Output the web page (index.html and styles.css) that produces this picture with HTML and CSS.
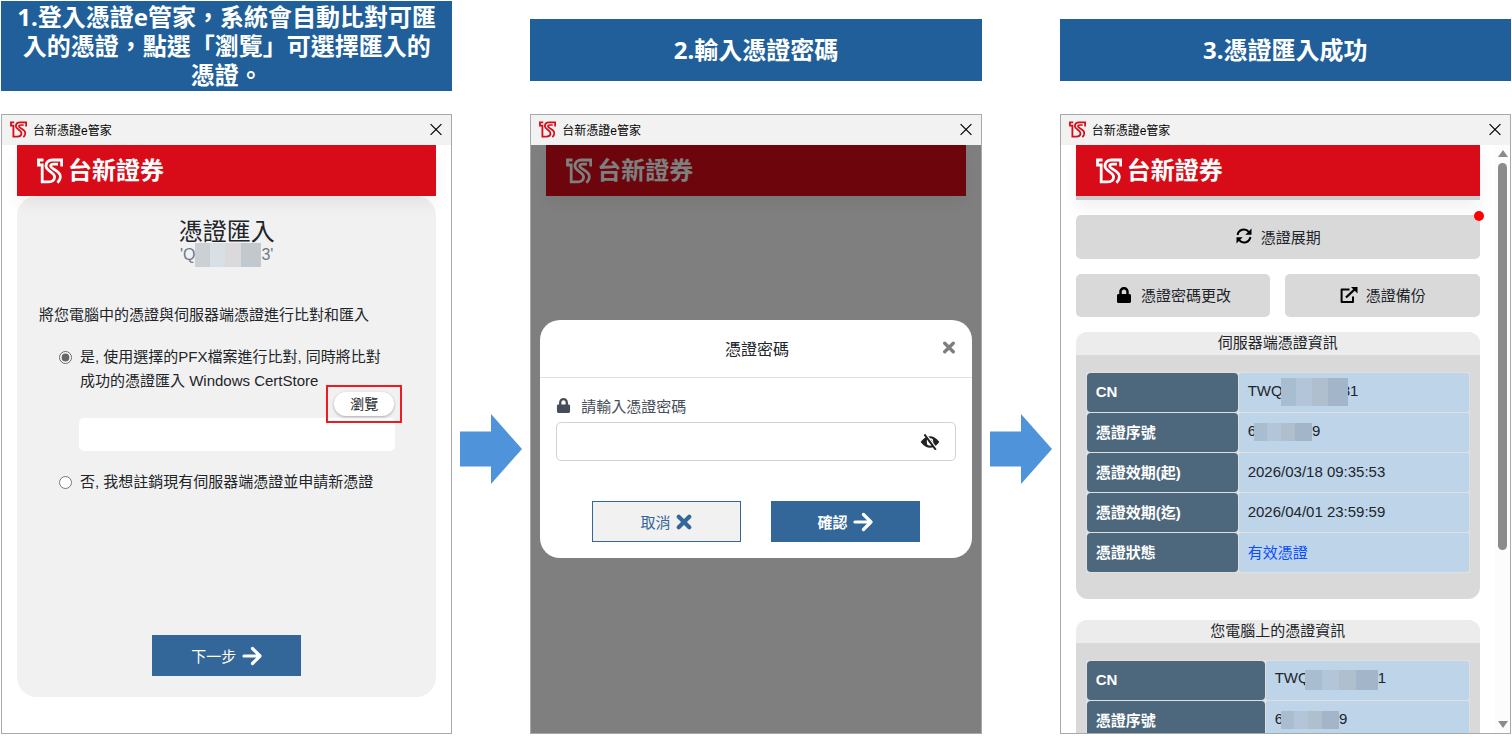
FILE: index.html
```html
<!DOCTYPE html>
<html lang="zh-Hant">
  <head>
    <meta charset="UTF-8" />
    <meta name="viewport" content="width=device-width, initial-scale=1.0" />
    <title>台新憑證e管家</title>
    <link rel="stylesheet" href="styles.css">
  </head>
  <body>
    <!-- Shared icons -->
    <svg class="icon-defs" aria-hidden="true">
      <symbol id="logo" viewBox="0 0 26 25">
        <g fill="none" stroke="currentColor">
          <path d="M6.500 1.500H1.500V6.500H5.200V23.400H11C15 23.400 17.600 21.400 17.600 18.400C17.600 13.600 9 12.400 9 7.400C9 3.600 11.600 1.500 15.400 1.500H24.700V8" stroke-width="2.800" />
          <path d="M21 5.600H16.600C14.600 5.600 13.600 6.400 13.600 7.600C13.600 10.800 23.400 11.800 23.400 18C23.400 20.600 22.400 22.400 20.400 24.200" stroke-width="2.600" />
        </g>
      </symbol>
      <symbol id="close" viewBox="0 0 12 12">
        <path d="M1 1L11 11M11 1L1 11" fill="none" stroke="currentColor" stroke-width="1.100" />
      </symbol>
      <symbol id="times" viewBox="0 0 14 14">
        <path d="M2.400 2.400L11.600 11.600M11.600 2.400L2.400 11.600" fill="none" stroke="currentColor" stroke-width="3.600" stroke-linecap="round" />
      </symbol>
      <symbol id="next" viewBox="0 0 20 20">
        <path d="M2 10H17M10.500 2.500L18 10L10.500 17.500" fill="none" stroke="currentColor" stroke-width="3.200" stroke-linecap="round" stroke-linejoin="round" />
      </symbol>
      <symbol id="lock" viewBox="0 0 448 512">
        <path fill="currentColor" d="M400 224h-24v-72C376 68.200 307.800 0 224 0S72 68.200 72 152v72H48c-26.500 0-48 21.500-48 48v192c0 26.500 21.500 48 48 48h352c26.500 0 48-21.500 48-48V272c0-26.500-21.500-48-48-48zm-104 0H152v-72c0-39.700 32.300-72 72-72s72 32.300 72 72v72z" />
      </symbol>
      <symbol id="sync" viewBox="0 0 16 16">
        <path d="M1.600 7A6.400 6.400 0 0 1 12.800 3.800L14 5M14.400 9A6.400 6.400 0 0 1 3.200 12.200L2 11" fill="none" stroke="currentColor" stroke-width="2" />
        <path d="M15.500 0.500V6.700H9.300ZM0.500 15.500V9.300H6.700Z" fill="currentColor" />
      </symbol>
      <symbol id="export" viewBox="0 0 18 16">
        <path d="M9.500 2.600H1.600V14.900H13V9.500" fill="none" stroke="currentColor" stroke-width="2" stroke-linejoin="round" />
        <path d="M6 10.500L14.500 2.500" stroke="currentColor" stroke-width="2.400" />
        <path d="M11 0H17.500V6.500Z" fill="currentColor" />
      </symbol>
      <symbol id="eye-off" viewBox="0 0 18 16">
        <path d="M1 8Q9 -1.500 17 8Q9 17.500 1 8Z" fill="none" stroke="currentColor" stroke-width="2" />
        <path d="M1 8Q4 3.500 7 3.200Q4.600 8 7 12.800Q4 12.500 1 8ZM17 8Q14 3.500 11 3.200Q13.400 8 11 12.800Q14 12.500 17 8Z" fill="currentColor" />
        <circle cx="9.500" cy="7.500" r="1.800" fill="currentColor" />
        <path d="M4.800 0L16 15.200" stroke="#fff" stroke-width="1.600" />
        <path d="M3.400 0.400L14.800 15.800" stroke="currentColor" stroke-width="2" />
      </symbol>
      <symbol id="step-arrow" viewBox="0 0 62 70">
        <path d="M0 17.500H31V0L62 35L31 70V52.500H0Z" fill="currentColor" />
      </symbol>
    </svg>

    <main class="guide">
      <!-- Step 1 -->
      <section class="step">
        <div class="caption-row">
          <h2 class="caption caption-tall">1.登入憑證e管家，系統會自動比對可匯入的憑證，點選「瀏覽」可選擇匯入的憑證。</h2>
        </div>
        <div class="window">
          <div class="titlebar">
            <svg class="title-logo"><use href="#logo" /></svg>
            <span>台新憑證e管家</span>
            <button class="close" aria-label="關閉"><svg><use href="#close" /></svg></button>
          </div>
          <div class="page">
            <header class="brand">
              <svg class="brand-logo"><use href="#logo" /></svg>
              <span>台新證券</span>
            </header>
            <form class="import-card">
              <h1>憑證匯入</h1>
              <p class="user-id">'Q<span class="mask mask-id"></span>3'</p>
              <p class="intro">將您電腦中的憑證與伺服器端憑證進行比對和匯入</p>
              <div class="choice">
                <input type="radio" name="mode" id="usePfx" checked />
                <label for="usePfx">是, 使用選擇的PFX檔案進行比對, 同時將比對成功的憑證匯入 Windows CertStore</label>
              </div>
              <div class="file-pick">
                <div class="highlight"><button type="button" class="browse">瀏覽</button></div>
                <input type="text" class="file-path" aria-label="憑證檔案" />
              </div>
              <div class="choice">
                <input type="radio" name="mode" id="applyNew" />
                <label for="applyNew">否, 我想註銷現有伺服器端憑證並申請新憑證</label>
              </div>
              <button type="button" class="btn btn-next">下一步 <svg><use href="#next" /></svg></button>
            </form>
          </div>
        </div>
      </section>

      <svg class="step-arrow"><use href="#step-arrow" /></svg>

      <!-- Step 2 -->
      <section class="step">
        <div class="caption-row">
          <h2 class="caption">2.輸入憑證密碼</h2>
        </div>
        <div class="window">
          <div class="titlebar">
            <svg class="title-logo"><use href="#logo" /></svg>
            <span>台新憑證e管家</span>
            <button class="close" aria-label="關閉"><svg><use href="#close" /></svg></button>
          </div>
          <div class="page">
            <header class="brand">
              <svg class="brand-logo"><use href="#logo" /></svg>
              <span>台新證券</span>
            </header>
            <div class="backdrop">
              <form class="modal">
                <div class="modal-header">
                  <h3>憑證密碼</h3>
                  <button type="button" class="modal-close" aria-label="關閉"><svg><use href="#times" /></svg></button>
                </div>
                <div class="modal-body">
                  <label for="certPassword"><svg><use href="#lock" /></svg>請輸入憑證密碼</label>
                  <div class="password">
                    <input type="password" id="certPassword" />
                    <button type="button" aria-label="顯示密碼"><svg><use href="#eye-off" /></svg></button>
                  </div>
                </div>
                <div class="modal-footer">
                  <button type="button" class="btn btn-cancel">取消 <svg><use href="#times" /></svg></button>
                  <button type="button" class="btn btn-ok">確認 <svg><use href="#next" /></svg></button>
                </div>
              </form>
            </div>
          </div>
        </div>
      </section>

      <svg class="step-arrow"><use href="#step-arrow" /></svg>

      <!-- Step 3 -->
      <section class="step">
        <div class="caption-row">
          <h2 class="caption">3.憑證匯入成功</h2>
        </div>
        <div class="window">
          <div class="titlebar">
            <svg class="title-logo"><use href="#logo" /></svg>
            <span>台新憑證e管家</span>
            <button class="close" aria-label="關閉"><svg><use href="#close" /></svg></button>
          </div>
          <div class="scroll-area">
            <div class="page">
              <header class="brand brand-line">
                <svg class="brand-logo"><use href="#logo" /></svg>
                <span>台新證券</span>
              </header>
              <div class="actions">
                <button class="action action-wide"><svg><use href="#sync" /></svg>憑證展期<span class="dot"></span></button>
                <button class="action"><svg><use href="#lock" /></svg>憑證密碼更改</button>
                <button class="action"><svg><use href="#export" /></svg>憑證備份</button>
              </div>
              <section class="info">
                <h3>伺服器端憑證資訊</h3>
                <table>
                  <tr>
                    <th>CN</th>
                    <td>TWQ<span class="mask mask-cn"></span>31</td>
                  </tr>
                  <tr>
                    <th>憑證序號</th>
                    <td>6<span class="mask mask-serial"></span>9</td>
                  </tr>
                  <tr>
                    <th>憑證效期(起)</th>
                    <td>2026/03/18 09:35:53</td>
                  </tr>
                  <tr>
                    <th>憑證效期(迄)</th>
                    <td>2026/04/01 23:59:59</td>
                  </tr>
                  <tr>
                    <th>憑證狀態</th>
                    <td class="valid">有效憑證</td>
                  </tr>
                </table>
              </section>
              <section class="info info-local">
                <h3>您電腦上的憑證資訊</h3>
                <table>
                  <tr>
                    <th>CN</th>
                    <td>TWQ<span class="mask mask-cn-local"></span>1</td>
                  </tr>
                  <tr>
                    <th>憑證序號</th>
                    <td>6<span class="mask mask-serial"></span>9</td>
                  </tr>
                </table>
              </section>
            </div>
            <div class="scrollbar">
              <span class="arrow-up"></span>
              <span class="thumb"></span>
              <span class="arrow-down"></span>
            </div>
          </div>
        </div>
      </section>
    </main>
  </body>
</html>
```

FILE: styles.css
```css
* {
  margin: 0;
  padding: 0;
  box-sizing: border-box;
}

body {
  font-family: "Liberation Sans", "Noto Sans CJK TC", sans-serif;
  font-size: 15px;
  color: #212529;
  background: #fff;
}

button,
input {
  font: inherit;
  color: inherit;
}

button {
  border: none;
  background: none;
  cursor: pointer;
}

.icon-defs {
  display: none;
}

.guide {
  display: grid;
  grid-template-columns: 1fr 78px 1fr 78px 1fr;
  height: 100vh;
  padding: 0 1px 4px;
}

.step {
  display: flex;
  flex-direction: column;
  min-width: 0;
  min-height: 0;
}

.step-arrow {
  width: 62px;
  height: 70px;
  margin-top: 414px;
  justify-self: center;
  color: #4f94da;
}

/* Captions */
.caption-row {
  display: flex;
  align-items: center;
  height: 114px;
  padding-bottom: 14px;
  flex-shrink: 0;
}

.caption {
  display: flex;
  align-items: center;
  justify-content: center;
  width: 100%;
  min-height: 62px;
  padding: 0 10px 2px;
  background: #215f9a;
  color: #fff;
  font-family: "Noto Sans", "Noto Sans CJK TC", sans-serif;
  font-size: 24px;
  line-height: 29px;
  text-align: center;
}

.caption-tall {
  min-height: 90px;
  margin-top: -8px;
}

/* Window frame */
.window {
  display: flex;
  flex-direction: column;
  flex: 1;
  min-height: 0;
  overflow: hidden;
  border: 1px solid #a9a9a9;
}

.titlebar {
  display: flex;
  align-items: center;
  height: 30px;
  padding: 0 8px 2px;
  gap: 6px;
  flex-shrink: 0;
  background: #f2f2f2;
  color: #000;
  font-size: 12px;
}

.title-logo {
  width: 17px;
  height: 17px;
  color: #d80c18;
}

.close {
  display: flex;
  margin-left: auto;
}

.close svg {
  width: 14px;
  height: 13px;
}

.page {
  position: relative;
  display: flex;
  flex-direction: column;
  flex: 1;
  min-height: 0;
  padding: 0 15px;
}

.brand {
  position: relative;
  z-index: 1;
  display: flex;
  align-items: center;
  gap: 5px;
  height: 51px;
  padding: 0 20px;
  flex-shrink: 0;
  background: #d80c18;
  color: #fff;
  font-size: 24px;
  font-weight: bold;
  line-height: 48px;
  box-shadow: 0 8px 16px rgba(0, 0, 0, 0.06);
}

.brand-line {
  height: 55px;
  border-bottom: 4px solid #c9cdcd;
}

.brand-logo {
  width: 26px;
  height: 26px;
}

.mask {
  display: inline-block;
  vertical-align: middle;
  background: linear-gradient(90deg, #ccd0d5 23%, #d8dfe5 23% 46%, #dcd9dc 46% 70%, #c1c8ce 70%);
}

/* Import form */
.import-card {
  display: flex;
  flex-direction: column;
  align-items: center;
  margin-bottom: 36px;
  flex: 1;
  padding: 20px 22px 21px;
  background: #f1f1f1;
  border-radius: 20px;
}

.import-card h1 {
  font-size: 24px;
  font-weight: 400;
  line-height: 32px;
}

.user-id {
  display: flex;
  align-items: center;
  height: 14px;
  color: #6c7a89;
  font-size: 16px;
}

.mask-id {
  width: 66px;
  height: 24px;
}

.intro {
  align-self: flex-start;
  margin: 41px 0 18px;
  line-height: 24px;
}

.choice {
  display: flex;
  align-items: flex-start;
  align-self: stretch;
  gap: 8px;
  padding: 0 28px 0 20px;
  line-height: 24px;
}

.choice input {
  width: 13px;
  height: 13px;
  margin-top: 6px;
  flex-shrink: 0;
  accent-color: #666;
}

.file-pick {
  display: flex;
  flex-direction: column;
  align-self: stretch;
  padding: 0 19px 0 40px;
  margin: -8px 0 19px;
}

.highlight {
  position: relative;
  display: flex;
  align-self: flex-end;
  margin: 0 -7px -5px 0;
  padding: 5px 6px;
  border: 2px solid #ed1c24;
}

.browse {
  width: 60px;
  height: 24px;
  background: #fff;
  border-radius: 12px;
  font-size: 14px;
  line-height: 22px;
  box-shadow: 0 1px 3px rgba(0, 0, 0, 0.3);
}

.file-path {
  width: 100%;
  height: 33px;
  padding: 0 8px;
  background: #fff;
  border: none;
  border-radius: 5px;
}

.btn {
  display: flex;
  align-items: center;
  justify-content: center;
  gap: 6px;
  width: 149px;
  height: 41px;
  background: #336699;
  border: 1px solid #336699;
  color: #fff;
}

.btn svg {
  width: 20px;
  height: 20px;
}

.btn-next {
  margin-top: auto;
}

/* Password dialog */
.backdrop {
  position: absolute;
  inset: 0;
  z-index: 2;
  display: flex;
  align-items: center;
  padding: 0 9px;
  background: rgba(0, 0, 0, 0.5);
}

.modal {
  width: 100%;
  background: #fff;
  border-radius: 20px;
}

.modal-header {
  display: flex;
  align-items: center;
  height: 58px;
  padding: 0 16px 2px 32px;
  border-bottom: 1px solid #dee2e6;
}

.modal-header h3 {
  flex: 1;
  font-size: 16px;
  font-weight: 400;
  text-align: center;
}

.modal-close {
  display: flex;
  color: #7f7f7f;
}

.modal-close svg {
  width: 14px;
  height: 13px;
}

.modal-body {
  padding: 15px 16px 16px;
}

.modal-body label {
  display: flex;
  align-items: center;
  gap: 10px;
  height: 24px;
  color: #454e58;
}

.modal-body label svg {
  width: 15px;
  height: 15px;
}

.password {
  display: flex;
  align-items: center;
  height: 39px;
  margin-top: 5px;
  padding: 0 15px 0 12px;
  border: 1px solid #ced4da;
  border-radius: 5px;
}

.password input {
  flex: 1;
  min-width: 0;
  border: none;
  outline: none;
}

.password button {
  display: flex;
  color: #222;
}

.password svg {
  width: 20px;
  height: 16px;
}

.modal-footer {
  display: flex;
  justify-content: center;
  gap: 30px;
  padding: 24px 16px 16px;
}

.btn-cancel {
  background: #f1f1f1;
  color: #336699;
}

.btn-cancel svg {
  width: 16px;
  height: 16px;
}

.btn-ok {
  font-weight: bold;
}

/* Certificate overview */
.scroll-area {
  display: flex;
  flex: 1;
  min-height: 0;
}

.scroll-area .page {
  overflow: hidden;
}

.actions {
  display: grid;
  grid-template-columns: 1fr 1fr;
  gap: 15px;
  margin: 15px 0;
  flex-shrink: 0;
}

.action {
  position: relative;
  display: flex;
  align-items: center;
  justify-content: center;
  gap: 8px;
  height: 43px;
  padding-bottom: 2px;
  background: #d9d9d9;
  border-radius: 5px;
}

.action svg {
  width: 18px;
  height: 16px;
  color: #000;
}

.action-wide {
  grid-column: span 2;
  height: 44px;
}

.dot {
  position: absolute;
  top: -4px;
  right: -4px;
  width: 10px;
  height: 10px;
  border-radius: 50%;
  background: #f00;
}

.info {
  margin-bottom: 21px;
  padding-bottom: 26px;
  flex-shrink: 0;
  background: #d9d9d9;
  border-radius: 12px;
}

.info h3 {
  height: 23px;
  margin-bottom: 17px;
  background: #ececec;
  border-radius: 12px 12px 0 0;
  font-size: 15px;
  font-weight: 400;
  line-height: 22px;
  text-align: center;
}

.info table {
  width: calc(100% - 20px);
  margin: 0 10px;
  border-spacing: 1px;
  background: #e0e0e0;
}

.info th,
.info td {
  height: 39px;
  padding: 0 9px 2px;
  text-align: left;
  white-space: nowrap;
}

.info th {
  width: 151px;
  background: #4d677d;
  border-radius: 4px;
  color: #fff;
}

.info td {
  background: #bed4e9;
  border-radius: 2px;
}

.info-local th {
  width: 178px;
}

.info .valid {
  color: #0a4dff;
}

/* Masks cover the edges of the digits beside them */
.info .mask {
  position: relative;
  margin-left: -2px;
  background: linear-gradient(90deg, #a9bdd0 23%, #b3c6d9 23% 46%, #afbfce 46% 70%, #a3b5c8 70%);
}

.info .mask-cn {
  width: 67px;
  height: 28px;
  margin-right: -6px;
}

.info .mask-cn-local {
  width: 73px;
  height: 20px;
  margin-left: -5px;
}

.info .mask-serial {
  width: 58px;
  height: 18px;
}

.scrollbar {
  display: flex;
  flex-direction: column;
  align-items: center;
  width: 15px;
  padding: 5px 0;
  background: #fcfcfc;
}

.arrow-up,
.arrow-down {
  border-left: 5px solid transparent;
  border-right: 5px solid transparent;
}

.arrow-up {
  border-bottom: 7px solid #8b8b8b;
}

.arrow-down {
  margin-top: auto;
  border-top: 7px solid #8b8b8b;
}

.thumb {
  width: 9px;
  height: 67%;
  margin-top: 6px;
  background: #8b8b8b;
  border-radius: 5px;
}
```
